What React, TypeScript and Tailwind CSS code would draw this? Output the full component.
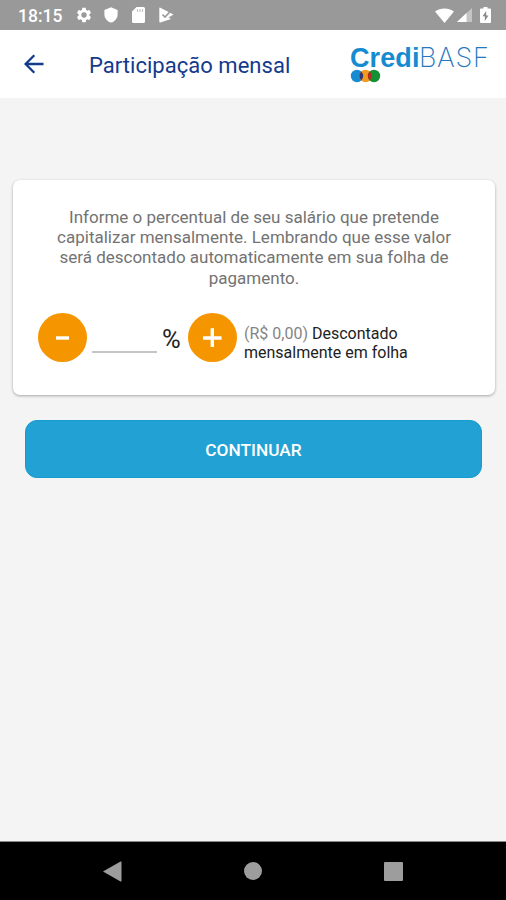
import React from "react";

function StatusBar() {
  return (
    <div className="flex h-[30px] shrink-0 items-center bg-[#999999] pl-[18px] pr-[15px] text-white">
      <span className="w-[45px] pt-[2px] text-[17.500px] leading-[30px] font-medium whitespace-nowrap">18:15</span>
      <svg className="ml-[12px] h-[18px] w-[18px] shrink-0" viewBox="0 0 24 24" fill="currentColor">
        <path d="M19.14 12.94c.04-.3.06-.61.06-.94 0-.32-.02-.64-.07-.94l2.03-1.58c.18-.14.23-.41.12-.61l-1.92-3.32c-.12-.22-.37-.29-.59-.22l-2.39.96c-.5-.38-1.03-.7-1.62-.94L14.4 2.81c-.04-.24-.24-.41-.48-.41h-3.84c-.24 0-.43.17-.47.41l-.36 2.54c-.59.24-1.13.57-1.62.94l-2.39-.96c-.22-.08-.47 0-.59.22L2.74 8.87c-.12.21-.08.47.12.61l2.03 1.58c-.05.3-.09.63-.09.94s.02.64.07.94l-2.03 1.58c-.18.14-.23.41-.12.61l1.92 3.32c.12.22.37.29.59.22l2.39-.96c.5.38 1.03.7 1.62.94l.36 2.54c.05.24.24.41.48.41h3.84c.24 0 .44-.17.47-.41l.36-2.54c.59-.24 1.13-.56 1.62-.94l2.39.96c.22.08.47 0 .59-.22l1.92-3.32c.12-.22.07-.47-.12-.61l-2.01-1.58zM12 15.6A3.6 3.6 0 1 1 12 8.4a3.6 3.6 0 0 1 0 7.2z" />
      </svg>
      <svg className="ml-[11px] h-[16px] w-[14px] shrink-0" viewBox="0 0 14 16" fill="currentColor">
        <path d="M7 .2 13.6 3v4.4c0 3.6-2.7 7-6.600 8.200C3.100 14.400.4 11 .4 7.400V3z" />
      </svg>
      <svg className="ml-[14px] h-[16px] w-[13px] shrink-0" viewBox="0 0 13 16">
        <path d="M4.600 0H11.500Q13 0 13 1.500V14.500Q13 16 11.500 16H1.500Q0 16 0 14.500V4.600z" fill="white" />
        <path d="M5.500 2.200v2.500M8 2.200v2.500M10.500 2.200v2.500" stroke="#bbb" strokeWidth="1.200" />
      </svg>
      <svg className="ml-[14px] h-[16px] w-[15px] shrink-0" viewBox="0 0 15 16">
        <path d="M.3 1.200Q.3.200 1.300.7L14.500 7.500 9.500 10.600 12 12 1.300 15.600Q.3 15.700.3 14.800z" fill="white" />
        <path d="m3.500 7.500 2.500 2.500 4.800-5" fill="none" stroke="#999999" strokeWidth="1.700" />
      </svg>
      <svg className="ml-auto h-[15px] w-[19px] shrink-0" viewBox="0 0 19 15" fill="currentColor">
        <path d="M0 3.500C5.300-.5 13.700-.5 19 3.500L9.500 15z" />
      </svg>
      <svg className="ml-[3px] h-[14px] w-[15px] shrink-0" viewBox="0 0 15 14">
        <path d="M15 0v14H0z" fill="#c4c4c4" />
        <path d="M9.500 5.100V14H0z" fill="white" />
      </svg>
      <svg className="ml-[8px] h-[16px] w-[11px] shrink-0" viewBox="0 0 11 16">
        <path d="M3.500 0h4v1.600H10q1 0 1 1V15q0 1-1 1H1q-1 0-1-1V2.600q0-1 1-1h2.500z" fill="white" />
        <path d="M6.200 4 2.500 9.300h2.300V14l3.700-5.500H6.200z" fill="#888" />
      </svg>
    </div>
  );
}

function Logo() {
  return (
    <div className="ml-auto mr-[17px] w-[139px] pt-[12px] font-['Liberation_Sans',sans-serif] text-[27px] leading-[32px] whitespace-nowrap">
      <div className="flex">
        <span className="w-[69px] font-bold tracking-[0.1px] text-[#168bd0]">Credi</span>
        <span className="font-['Inter',sans-serif] text-[27px] font-extralight tracking-[0.7px] text-[#2577c0]">BASF</span>
      </div>
      <svg className="-mt-[5px] block" width="32" height="14" viewBox="0 0 32 14">
        <circle cx="7" cy="7" r="6.200" fill="#168bd0" />
        <circle cx="15.500" cy="7" r="6.200" fill="#f59a20" />
        <circle cx="24" cy="7" r="6.200" fill="#159035" />
        <path d="M11.250 2.500a6.200 6.200 0 0 1 0 9a6.200 6.200 0 0 1 0-9z" fill="#39366f" />
        <path d="M19.750 2.500a6.200 6.200 0 0 1 0 9a6.200 6.200 0 0 1 0-9z" fill="#b72b25" />
      </svg>
    </div>
  );
}

function Header() {
  return (
    <header className="flex h-[68px] shrink-0 bg-white text-[#143a8e]">
      <button className="ml-[24px] flex h-[68px] w-[20px] items-center" aria-label="Voltar">
        <svg width="20" height="20" viewBox="0 0 20 20" fill="none" stroke="currentColor" strokeWidth="2.300">
          <path d="M19.500 10H2M10.300 1.300 1.600 10l8.700 8.700" />
        </svg>
      </button>
      <h1 className="ml-[45px] pt-[1px] text-[22px] leading-[70px] tracking-[0.03px] whitespace-nowrap">Participação mensal</h1>
      <Logo />
    </header>
  );
}

function RoundButton({ plus = false }: { plus?: boolean }) {
  return (
    <button className="flex h-[49px] w-[49px] shrink-0 items-center justify-center rounded-full bg-[#f59500]" aria-label={plus ? "Aumentar" : "Diminuir"}>
      <svg width="20" height="20" viewBox="0 0 20 20" stroke="white" strokeWidth="3.400">
        <path d={plus ? "M0 11h18.600M9.300 1.300v19" : "M3 11h13"} />
      </svg>
    </button>
  );
}

export default function App() {
  return (
    <div className="flex h-[900px] w-[506px] flex-col overflow-hidden bg-[#f4f4f4] font-['Roboto',sans-serif]">
      <StatusBar />
      <Header />
      <main className="flex-1 pt-[82px]">
        <section className="ml-[13px] h-[215px] w-[482px] rounded-[7px] bg-white pt-[27px] shadow-[0_1px_3px_rgba(0,0,0,0.32)]">
          <p className="text-center text-[17px] leading-[20.200px] text-[#737373]">
            <span className="block">Informe o percentual de seu salário que pretende</span>
            <span className="block">capitalizar mensalmente. Lembrando que esse valor</span>
            <span className="block">será descontado automaticamente em sua folha de</span>
            <span className="block">pagamento.</span>
          </p>
          <div className="mt-[25px] flex h-[49px] items-center pl-[25px]">
            <RoundButton />
            <div className="mt-[2px] ml-[5px] h-[30px] w-[65px] border-b-2 border-[#c5c5c5]" />
            <span className="mt-[3px] ml-[5px] w-[26px] text-[25.500px] leading-[30px] text-[#222]">%</span>
            <RoundButton plus />
            <p className="ml-[7px] pt-[13px] text-[16px] leading-[18.500px] whitespace-nowrap text-[#222]">
              <span className="text-[#858585]">(R$ 0,00)</span> Descontado
              <br />
              mensalmente em folha
            </p>
          </div>
        </section>
        <button className="mt-[25px] ml-[25px] flex h-[58px] w-[457px] items-center justify-center rounded-[12px] border border-[#159bcd] bg-[#22a1d4] pt-[4px] text-[17.300px] font-medium text-white">
          CONTINUAR
        </button>
      </main>
      <nav className="flex h-[59px] shrink-0 items-center border-t border-[#888] bg-black pl-[103px] text-[#9d9d9d]">
        <svg width="19" height="21" viewBox="0 0 19 21" fill="currentColor">
          <path d="M0 10.500 17.500.5q1-.4 1 .6v18.800q0 1-1 .6z" />
        </svg>
        <span className="ml-[122px] h-[18px] w-[18px] rounded-full bg-[#9d9d9d]" />
        <span className="ml-[122px] h-[19px] w-[19px] rounded-[1px] bg-[#9d9d9d]" />
      </nav>
    </div>
  );
}
